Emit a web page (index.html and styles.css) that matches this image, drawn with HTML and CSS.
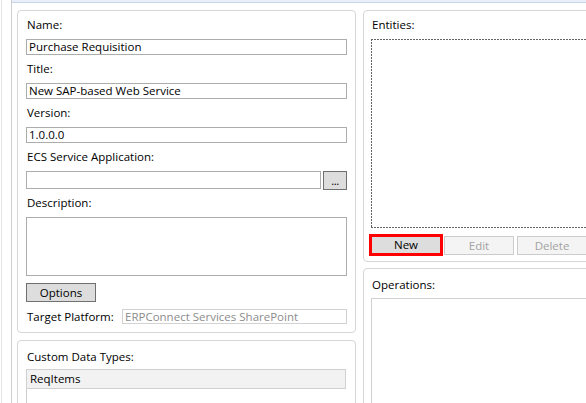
FILE: index.html
```html
<!DOCTYPE html>
<html>
<head>
<meta charset="utf-8">
<link rel="stylesheet" href="styles.css">
</head>
<body>
<div class="window">
  <div class="rail"></div>
  <div class="main">
    <div class="topbar"></div>
    <div class="content">
      <div class="col col-left">
        <section class="panel props">
          <div class="label">Name:</div>
          <div class="input">Purchase Requisition</div>
          <div class="label">Title:</div>
          <div class="input">New SAP-based Web Service</div>
          <div class="label">Version:</div>
          <div class="input">1.0.0.0</div>
          <div class="label">ECS Service Application:</div>
          <div class="browse-row">
            <div class="input input-tall"></div>
            <div class="btn btn-browse">...</div>
          </div>
          <div class="label">Description:</div>
          <div class="textarea"></div>
          <div class="btn btn-options">Options</div>
          <div class="target-row">
            <div class="target-label">Target Platform:</div>
            <div class="input input-disabled">ERPConnect Services SharePoint</div>
          </div>
        </section>
        <section class="panel types">
          <div class="label">Custom Data Types:</div>
          <div class="types-list">
            <div class="types-item">ReqItems</div>
          </div>
        </section>
      </div>
      <div class="col col-right">
        <section class="panel entities">
          <div class="label">Entities:</div>
          <div class="dashed-list"></div>
          <div class="btn-row">
            <div class="btn btn-new">New</div>
            <div class="btn btn-disabled">Edit</div>
            <div class="btn btn-disabled">Delete</div>
          </div>
        </section>
        <section class="panel operations">
          <div class="label">Operations:</div>
          <div class="ops-list"></div>
        </section>
      </div>
    </div>
  </div>
</div>
</body>
</html>
```

FILE: styles.css
```css
html, body {
  margin: 0;
  padding: 0;
  width: 586px;
  height: 403px;
  overflow: hidden;
  background: #ffffff;
  font-family: "Segoe UI", "Open Sans", "Noto Sans", sans-serif;
  font-size: 11.5px;
  color: #000000;
}

.window {
  display: flex;
  height: 403px;
}

.rail {
  flex: none;
  margin-left: 1px;
  width: 9px;
  border-left: 1px solid #e4e4e4;
  border-right: 1px solid #cfcfcf;
}

.main {
  flex: 1;
  min-width: 0;
  display: flex;
  flex-direction: column;
  overflow: hidden;
}

.topbar {
  flex: none;
  height: 2px;
  background: #e9eff8;
  border-bottom: 1px solid #c8d5ea;
}

.content {
  display: grid;
  grid-template-columns: 339px 260px;
  column-gap: 7px;
  padding: 7px 0 0 5px;
  align-items: start;
}

.col {
  display: flex;
  flex-direction: column;
}

.col-left { gap: 7px; }
.col-right { gap: 6px; }

.panel {
  border: 1px solid #d6d6d6;
  border-radius: 4px;
  display: flex;
  flex-direction: column;
}

.label {
  line-height: 16px;
  height: 16px;
  white-space: nowrap;
  padding-left: 1px;
}

.props {
  padding: 6px 8px 8px 8px;
}

.props .label {
  margin-bottom: 6px;
}

.input {
  box-sizing: border-box;
  height: 16px;
  border: 1px solid #acacac;
  padding: 0 2px;
  line-height: 14px;
  white-space: nowrap;
  overflow: hidden;
  margin-bottom: 6px;
}

.browse-row {
  display: flex;
  align-items: flex-start;
  gap: 2px;
  height: 18px;
  margin-bottom: 6px;
}

.input-tall {
  flex: 1;
  height: 18px;
  margin-bottom: 0;
}

.btn {
  box-sizing: border-box;
  text-align: center;
  white-space: nowrap;
}

.btn-browse {
  flex: none;
  width: 24px;
  height: 19px;
  background: #dddddd;
  border: 1px solid #707070;
  line-height: 18px;
  letter-spacing: -0.5px;
}

.textarea {
  box-sizing: border-box;
  height: 59px;
  border: 1px solid #acacac;
  margin-bottom: 7px;
}

.btn-options {
  width: 70px;
  height: 19px;
  background: #dddddd;
  border: 1px solid #707070;
  line-height: 17px;
  margin-bottom: 7px;
}

.target-row {
  display: flex;
  align-items: center;
  height: 15px;
}

.target-label {
  flex: none;
  width: 95px;
  padding-left: 1px;
  line-height: 15px;
}

.input-disabled {
  flex: 1;
  height: 15px;
  margin-bottom: 0;
  border-color: #d2d2d2;
  color: #8c8c8c;
  line-height: 13px;
}

.types {
  padding: 8px 8px 0 8px;
}

.types .label {
  margin-bottom: 4px;
}

.types-list {
  height: 60px;
  border-left: 1px solid #cccccc;
  margin-right: 1px;
}

.types-item {
  box-sizing: border-box;
  height: 20px;
  margin-left: -1px;
  background: #f2f2f2;
  border: 1px solid #d0d0d0;
  padding-left: 3px;
  line-height: 18px;
}

.entities {
  padding: 6px 7px 5px 7px;
}

.entities .label {
  margin-bottom: 6px;
}

.dashed-list {
  height: 189px;
  background:
    repeating-linear-gradient(90deg, #666666 0 2px, transparent 2px 3px) top left / 100% 1px no-repeat,
    repeating-linear-gradient(90deg, #666666 0 2px, transparent 2px 3px) bottom left / 100% 1px no-repeat,
    repeating-linear-gradient(180deg, #666666 0 2px, transparent 2px 3px) top left / 1px 100% no-repeat,
    repeating-linear-gradient(180deg, #666666 0 2px, transparent 2px 3px) top right / 1px 100% no-repeat;
  margin-bottom: 6px;
}

.btn-row {
  display: flex;
  align-items: center;
  gap: 3px;
  margin-left: -2px;
  height: 22px;
}

.btn-new {
  width: 74px;
  height: 22px;
  background: #dddddd;
  border: 3px solid #ff0000;
  line-height: 16px;
  margin-right: -2px;
}

.btn-disabled {
  width: 70px;
  height: 19px;
  background: #f4f4f4;
  border: 1px solid #cccccc;
  color: #a2a2a2;
  line-height: 17px;
}

.operations {
  padding: 8px 7px 0 7px;
}

.operations .label {
  margin-bottom: 5px;
}

.ops-list {
  height: 140px;
  border: 1px solid #d0d0d0;
}
```
